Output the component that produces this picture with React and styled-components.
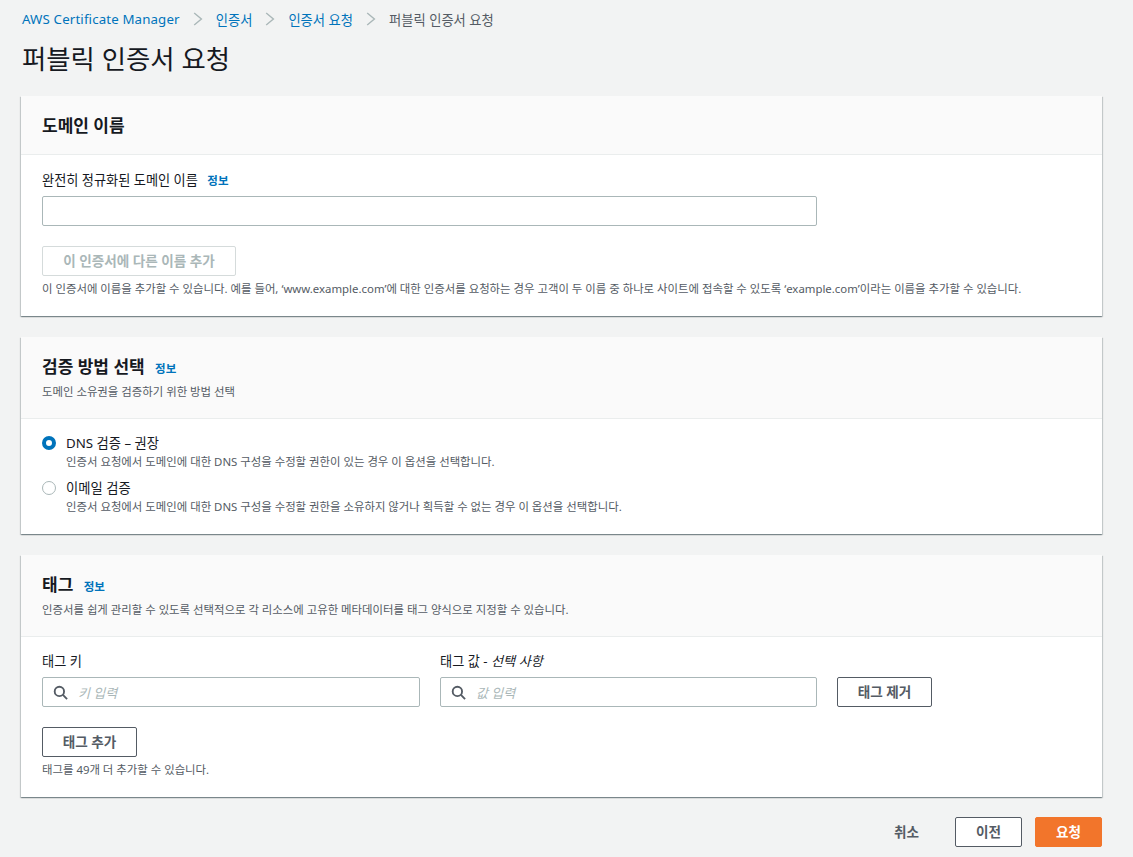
import React from "react";
import styled, { createGlobalStyle } from "styled-components";

const GlobalStyle = createGlobalStyle`
    html, body {
        margin: 0;
        padding: 0;
        background: #f2f3f3;
    }
    body {
        font-family: "Noto Sans", "Noto Sans CJK KR", sans-serif;
        color: #16191f;
    }
    * {
        box-sizing: border-box;
    }
`;

const Search = () => (
    <SearchIcon viewBox="0 0 16 16" fill="none" stroke="#545b64" strokeWidth="2">
        <circle cx="6.8" cy="6.8" r="5" />
        <path d="M10.6 10.6 15 15" />
    </SearchIcon>
);

const Chevron = () => (
    <Sep viewBox="0 0 10 14" fill="none" stroke="#aab7b8" strokeWidth="1.4">
        <path d="M1.2 1 8.4 7 1.2 13" />
    </Sep>
);

export default function App() {
    return (
        <Page>
            <GlobalStyle />
            <Crumbs>
                <RootCrumb>AWS Certificate Manager</RootCrumb>
                <Chevron />
                <Crumb>인증서</Crumb>
                <Chevron />
                <Crumb>인증서 요청</Crumb>
                <Chevron />
                <CrumbCurrent>퍼블릭 인증서 요청</CrumbCurrent>
            </Crumbs>
            <Title>퍼블릭 인증서 요청</Title>

            <Card>
                <CardHeader>
                    <CardTitle>도메인 이름</CardTitle>
                </CardHeader>
                <CardBody>
                    <Label>
                        완전히 정규화된 도메인 이름 <Info>정보</Info>
                    </Label>
                    <TextInput />
                    <AddNameButton disabled>이 인증서에 다른 이름 추가</AddNameButton>
                    <Help>
                        이 인증서에 이름을 추가할 수 있습니다. 예를 들어, ‘www.example.com’에 대한 인증서를 요청하는 경우 고객이 두 이름 중 하나로 사이트에 접속할 수 있도록 ‘example.com’이라는 이름을 추가할 수 있습니다.
                    </Help>
                </CardBody>
            </Card>

            <Card>
                <CardHeader $sub>
                    <CardTitle>
                        검증 방법 선택 <Info>정보</Info>
                    </CardTitle>
                    <CardDesc>도메인 소유권을 검증하기 위한 방법 선택</CardDesc>
                </CardHeader>
                <RadioBody>
                    <RadioRow>
                        <Radio $checked />
                        <div>
                            <RadioLabel>DNS 검증 – 권장</RadioLabel>
                            <RadioHelp>인증서 요청에서 도메인에 대한 DNS 구성을 수정할 권한이 있는 경우 이 옵션을 선택합니다.</RadioHelp>
                        </div>
                    </RadioRow>
                    <RadioRow>
                        <Radio />
                        <div>
                            <RadioLabel>이메일 검증</RadioLabel>
                            <RadioHelp>인증서 요청에서 도메인에 대한 DNS 구성을 수정할 권한을 소유하지 않거나 획득할 수 없는 경우 이 옵션을 선택합니다.</RadioHelp>
                        </div>
                    </RadioRow>
                </RadioBody>
            </Card>

            <Card>
                <CardHeader $sub>
                    <CardTitle>
                        태그 <Info>정보</Info>
                    </CardTitle>
                    <CardDesc>인증서를 쉽게 관리할 수 있도록 선택적으로 각 리소스에 고유한 메타데이터를 태그 양식으로 지정할 수 있습니다.</CardDesc>
                </CardHeader>
                <CardBody $tight>
                    <TagRow>
                        <div>
                            <Label>태그 키</Label>
                            <SearchBox>
                                <Search />
                                <Placeholder>키 입력</Placeholder>
                            </SearchBox>
                        </div>
                        <div>
                            <Label>
                                태그 값 - <em>선택 사항</em>
                            </Label>
                            <SearchBox>
                                <Search />
                                <Placeholder>값 입력</Placeholder>
                            </SearchBox>
                        </div>
                        <TagButton>태그 제거</TagButton>
                    </TagRow>
                    <AddTagButton>태그 추가</AddTagButton>
                    <Help>태그를 49개 더 추가할 수 있습니다.</Help>
                </CardBody>
            </Card>

            <Footer>
                <CancelButton>취소</CancelButton>
                <FooterButton>이전</FooterButton>
                <PrimaryButton>요청</PrimaryButton>
            </Footer>
        </Page>
    );
}

const Page = styled.div`
    width: 1133px;
    height: 857px;
    overflow: hidden;
    padding: 9px 31px 0 21px;
`;

const Crumbs = styled.div`
    display: flex;
    align-items: center;
    height: 20px;
    margin-left: 1px;
    font-size: 13.3px;
`;

const Crumb = styled.a`
    color: #0073bb;
`;

const RootCrumb = styled(Crumb)`
    letter-spacing: 0.13px;
`;

const CrumbCurrent = styled.span`
    color: #545b64;
`;

const Sep = styled.svg`
    width: 10px;
    height: 14px;
    margin: 0 13px;
`;

const Title = styled.h1`
    margin: 11px 0 17px 1px;
    height: 39px;
    font-size: 26.4px;
    line-height: 39px;
    font-weight: 400;
    color: #16191f;
`;

const Card = styled.section`
    background: #fff;
    margin-bottom: 21px;
    box-shadow: 0 1px 1px 0 rgba(0, 28, 36, 0.3), 1px 1px 1px 0 rgba(0, 28, 36, 0.15), -1px 1px 1px 0 rgba(0, 28, 36, 0.15);

    &:last-of-type {
        margin-bottom: 20px;
    }
`;

const CardHeader = styled.header`
    background: #fafafa;
    border-bottom: 1px solid #eaeded;
    padding: ${p => (p.$sub ? "19px 21px 13px" : "19px 21px 18px")};
    height: ${p => (p.$sub ? "82px" : "59px")};
`;

const CardTitle = styled.h2`
    margin: 0;
    font-size: 17px;
    line-height: 21px;
    font-weight: 700;
    color: #16191f;
`;

const CardDesc = styled.p`
    margin: 4px 0 0;
    font-size: 11.4px;
    line-height: 17px;
    color: #545b64;
`;

const Info = styled.a`
    margin-left: 6px;
    font-size: 11.5px;
    font-weight: 700;
    color: #0073bb;
`;

const CardBody = styled.div`
    padding: ${p => (p.$tight ? "14px" : "15px")} 21px 19px;
`;

const Label = styled.div`
    height: 20px;
    margin-bottom: 6px;
    font-size: 13.2px;
    line-height: 20px;
    color: #16191f;

    em {
        font-style: italic;
    }
`;

const TextInput = styled.input`
    display: block;
    width: 775px;
    height: 30px;
    border: 1px solid #aab7b8;
    border-radius: 2px;
    background: #fff;
`;

const Button = styled.button`
    display: block;
    height: 30px;
    padding: 0 0 2px;
    border: 1px solid #545b64;
    border-radius: 2px;
    background: #fff;
    font-family: inherit;
    font-size: 13.6px;
    font-weight: 700;
    color: #545b64;
`;

const AddNameButton = styled(Button)`
    width: 194px;
    margin-top: 20px;
    border-color: #d5dbdb;
    color: #aab7b8;
`;

const Help = styled.p`
    margin: 5px 0 0;
    font-size: 11.4px;
    line-height: 16px;
    color: #545b64;
    white-space: nowrap;
`;

const RadioHelp = styled(Help)`
    margin: 1px 0 0;
    line-height: 17px;
`;

const RadioBody = styled.div`
    display: flex;
    flex-direction: column;
    gap: 9px;
    padding: 15px 21px 19px;
`;

const RadioRow = styled.div`
    display: flex;
    gap: 10px;
`;

const Radio = styled.span`
    flex: none;
    width: 14px;
    height: 14px;
    margin: 2px 0 0;
    border-radius: 50%;
    background: #fff;
    border: ${p => (p.$checked ? "4px solid #0073bb" : "1px solid #aab7b8")};
`;

const RadioLabel = styled.div`
    font-size: 13.3px;
    line-height: 18px;
    color: #16191f;
`;

const TagRow = styled.div`
    display: grid;
    grid-template-columns: 378px 377px 95px;
    align-items: end;
    gap: 20px;
`;

const SearchBox = styled.div`
    display: flex;
    align-items: center;
    gap: 10px;
    height: 30px;
    padding: 0 10px;
    border: 1px solid #aab7b8;
    border-radius: 2px;
    background: #fff;
`;

const SearchIcon = styled.svg`
    width: 15px;
    height: 15px;
`;

const Placeholder = styled.span`
    font-size: 13px;
    font-style: italic;
    color: #aab7b8;
`;

const TagButton = styled(Button)`
    width: 95px;
`;

const AddTagButton = styled(TagButton)`
    margin-top: 20px;
`;

const Footer = styled.div`
    display: flex;
    justify-content: flex-end;
    align-items: center;
    gap: 13px;
`;

const CancelButton = styled(Button)`
    width: 71px;
    border: 0;
    background: transparent;
`;

const FooterButton = styled(Button)`
    width: 67px;
`;

const PrimaryButton = styled(Button)`
    width: 67px;
    border-color: #f2752b;
    background: #f2752b;
    color: #fff;
`;
